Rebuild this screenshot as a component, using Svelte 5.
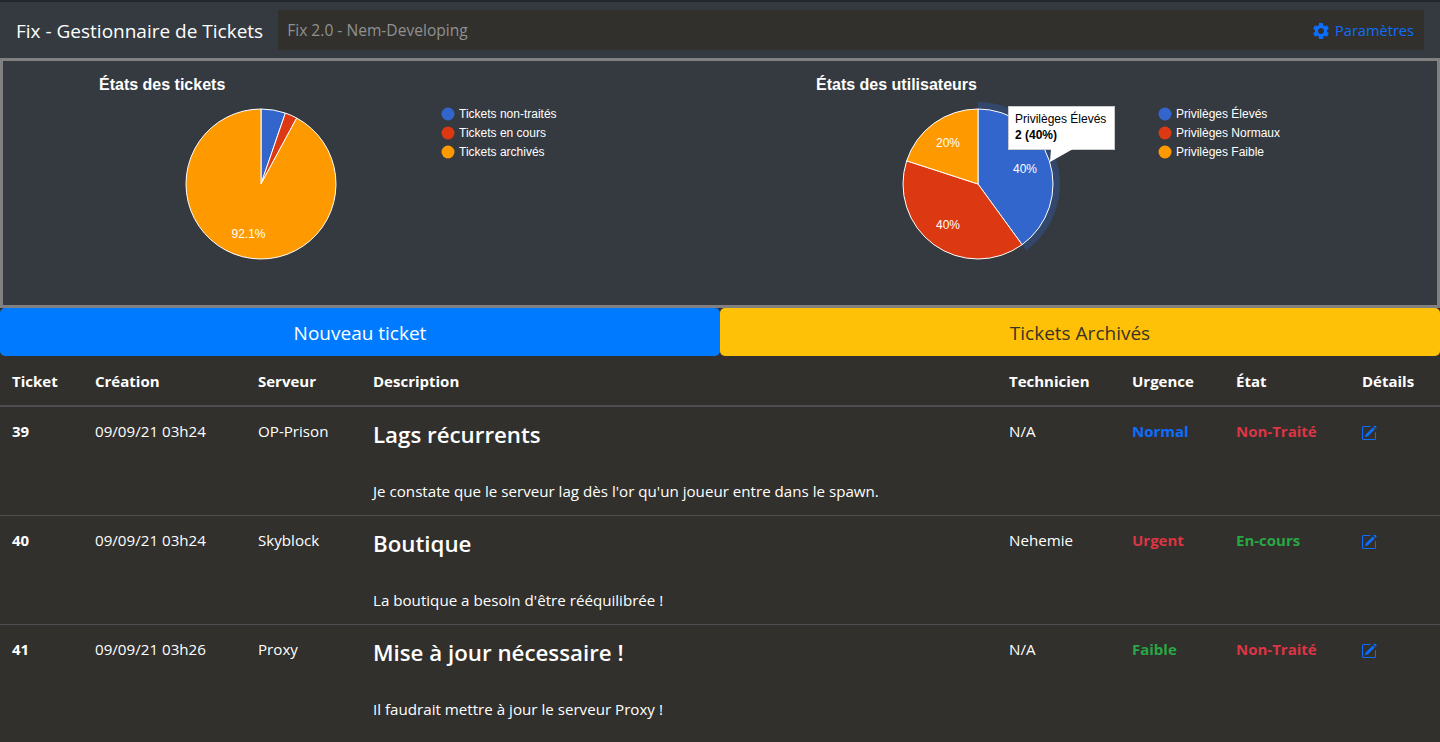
<script>
	const columns = ['Ticket', 'Création', 'Serveur', 'Description', 'Technicien', 'Urgence', 'État', 'Détails'];

	const tickets = [
		{ id: 39, date: '09/09/21 03h24', server: 'OP-Prison', title: 'Lags récurrents', text: "Je constate que le serveur lag dès l'or qu'un joueur entre dans le spawn.", tech: 'N/A', urgency: 'Normal', urgencyClass: 'blue', state: 'Non-Traité', stateClass: 'red' },
		{ id: 40, date: '09/09/21 03h24', server: 'Skyblock', title: 'Boutique', text: "La boutique a besoin d'être rééquilibrée !", tech: 'Nehemie', urgency: 'Urgent', urgencyClass: 'red', state: 'En-cours', stateClass: 'green' },
		{ id: 41, date: '09/09/21 03h26', server: 'Proxy', title: 'Mise à jour nécessaire !', text: 'Il faudrait mettre à jour le serveur Proxy !', tech: 'N/A', urgency: 'Faible', urgencyClass: 'green', state: 'Non-Traité', stateClass: 'red' }
	];

	const colors = ['#3366cc', '#dc3912', '#ff9900'];
	const cx = 258;
	const cy = 123;
	const r = 75;

	function point(radius, turn) {
		const a = turn * 2 * Math.PI;
		return [cx + radius * Math.sin(a), cy - radius * Math.cos(a)];
	}

	function slice(from, to) {
		const [x1, y1] = point(r, from);
		const [x2, y2] = point(r, to);
		const large = to - from > 0.5 ? 1 : 0;
		return `M${cx} ${cy}L${x1} ${y1}A${r} ${r} 0 ${large} 1 ${x2} ${y2}Z`;
	}

	function halo(from, to, inner, outer) {
		const [x1, y1] = point(outer, from);
		const [x2, y2] = point(outer, to);
		const [x3, y3] = point(inner, to);
		const [x4, y4] = point(inner, from);
		return `M${x1} ${y1}A${outer} ${outer} 0 0 1 ${x2} ${y2}L${x3} ${y3}A${inner} ${inner} 0 0 0 ${x4} ${y4}Z`;
	}

	function slices(values) {
		let start = 0;
		return values.map((v, i) => {
			const d = slice(start, start + v);
			start += v;
			return { d, color: colors[i] };
		});
	}

	const charts = [
		{
			title: 'États des tickets',
			legend: ['Tickets non-traités', 'Tickets en cours', 'Tickets archivés'],
			slices: slices([2 / 38, 1 / 38, 35 / 38]),
			labels: [{ x: 245.5, y: 177, text: '92.1%' }]
		},
		{
			title: 'États des utilisateurs',
			legend: ['Privilèges Élevés', 'Privilèges Normaux', 'Privilèges Faible'],
			slices: slices([0.4, 0.4, 0.2]),
			labels: [
				{ x: 305, y: 112, text: '40%' },
				{ x: 228, y: 168, text: '40%' },
				{ x: 228, y: 86, text: '20%' }
			],
			tooltip: true
		}
	];
</script>

<header class="navbar">
	<span class="brand">Fix - Gestionnaire de Tickets</span>
	<div class="nav-box">
		<span class="version">Fix 2.0 - Nem-Developing</span>
		<a class="settings" href="#settings">
			<svg class="gear" viewBox="0 0 24 24" aria-hidden="true">
				<path d="M19.14 12.94c.04-.3.06-.61.06-.94 0-.32-.02-.64-.07-.94l2.03-1.58a.49.49 0 0 0 .12-.61l-1.92-3.32a.488.488 0 0 0-.59-.29l-2.39.96c-.5-.38-1.03-.7-1.62-.94l-.36-2.54a.484.484 0 0 0-.48-.41h-3.84c-.24 0-.43.17-.47.41l-.36 2.54c-.59.24-1.13.57-1.62.94l-2.39-.96c-.22-.08-.47 0-.59.22L2.74 8.87c-.12.21-.08.47.12.61l2.03 1.58c-.05.3-.09.63-.09.94s.02.64.07.94l-2.03 1.58a.49.49 0 0 0-.12.61l1.92 3.32c.12.22.37.29.59.22l2.39-.96c.5.38 1.03.7 1.62.94l.36 2.54c.05.24.24.41.48.41h3.84c.24 0 .44-.17.47-.41l.36-2.54c.59-.24 1.13-.56 1.62-.94l2.39.96c.22.08.47 0 .59-.22l1.92-3.32c.12-.22.07-.47-.12-.61l-2.01-1.58zM12 15.6c-1.98 0-3.6-1.62-3.6-3.6s1.62-3.6 3.6-3.6 3.6 1.62 3.6 3.6-1.62 3.6-3.6 3.6z" />
			</svg>
			Paramètres
		</a>
	</div>
</header>

<section class="charts">
	{#each charts as chart}
		<svg class="chart" viewBox="0 0 717 244" width="717" height="244">
			<text class="chart-title" x="96" y="29">{chart.title}</text>

			{#if chart.tooltip}
				<path d={halo(0, 0.4, 75, 82)} fill="#3366cc" opacity="0.3" />
			{/if}
			{#each chart.slices as s}
				<path d={s.d} fill={s.color} stroke="#fff" stroke-width="1" />
			{/each}
			{#each chart.labels as label}
				<text class="slice-label" x={label.x} y={label.y}>{label.text}</text>
			{/each}

			{#each chart.legend as item, i}
				<circle cx="445" cy={53 + i * 19} r="6.5" fill={colors[i]} />
				<text class="legend" x="456" y={57 + i * 19}>{item}</text>
			{/each}

			{#if chart.tooltip}
				<rect x="288.5" y="45.5" width="106" height="43" fill="#fff" stroke="#ccc" stroke-width="1" />
				<path d="M331 88L353 88L330 101Z" fill="#fff" />
				<text class="tip" x="295" y="62">Privilèges Élevés</text>
				<text class="tip tip-bold" x="295" y="78">2 <tspan class="tip-value">(40%)</tspan></text>
			{/if}
		</svg>
	{/each}
</section>

<div class="actions">
	<a class="btn btn-blue" href="#new">Nouveau ticket</a>
	<a class="btn btn-yellow" href="#archives">Tickets Archivés</a>
</div>

<table>
	<thead>
		<tr>
			{#each columns as column}
				<th>{column}</th>
			{/each}
		</tr>
	</thead>
	<tbody>
		{#each tickets as ticket}
			<tr>
				<td class="strong">{ticket.id}</td>
				<td>{ticket.date}</td>
				<td>{ticket.server}</td>
				<td>
					<h3>{ticket.title}</h3>
					<p>{ticket.text}</p>
				</td>
				<td>{ticket.tech}</td>
				<td class="strong {ticket.urgencyClass}">{ticket.urgency}</td>
				<td class="strong {ticket.stateClass}">{ticket.state}</td>
				<td>
					<a class="edit" href="#edit" aria-label="Modifier">
						<svg viewBox="0 0 16 16" width="16" height="16" aria-hidden="true">
							<path d="M15.502 1.94a.5.5 0 0 1 0 .706L14.459 3.69l-2-2L13.502.646a.5.5 0 0 1 .707 0l1.293 1.293zm-1.75 2.456-2-2L4.939 9.21a.5.5 0 0 0-.121.196l-.805 2.414a.25.25 0 0 0 .316.316l2.414-.805a.5.5 0 0 0 .196-.12l6.813-6.814z" />
							<path d="M1 13.5A1.5 1.5 0 0 0 2.5 15h11a1.5 1.5 0 0 0 1.5-1.5v-6a.5.5 0 0 0-1 0v6a.5.5 0 0 1-.5.5h-11a.5.5 0 0 1-.5-.5v-11a.5.5 0 0 1 .5-.5H9a.5.5 0 0 0 0-1H2.5A1.5 1.5 0 0 0 1 2.5v11z" />
						</svg>
					</a>
				</td>
			</tr>
		{/each}
	</tbody>
</table>

<style>
	:global(body) {
		background: #31302c;
		font-family: 'Open Sans', 'Noto Sans', sans-serif;
		font-size: 15.15px;
		color: #fff;
		overflow: hidden;
	}

	.navbar {
		display: flex;
		align-items: center;
		height: 56px;
		padding: 0 16px;
		background: #343a40;
		border-top: 2px solid #24272b;
	}
	.brand {
		font-size: 19px;
		margin-right: 15px;
		padding-top: 1px;
		white-space: nowrap;
	}
	.nav-box {
		flex: 1;
		display: flex;
		align-items: center;
		justify-content: space-between;
		height: 40px;
		padding: 0 10px 0 9px;
		background: #31302c;
	}
	.version { color: #8f9091; font-size: 15.6px; }
	.settings {
		display: flex;
		align-items: center;
		gap: 4px;
		color: #0d6efd;
		font-size: 14.6px;
		text-decoration: none;
	}
	.gear {
		width: 20px;
		height: 20px;
		margin-top: 2px;
		fill: #0d6efd;
	}

	.charts {
		display: grid;
		grid-template-columns: 717px 717px;
		height: 244px;
		background: #343a40;
		border: 3px solid #808080;
	}
	.chart { display: block; }
	.chart-title {
		font: bold 16px 'Liberation Sans', sans-serif;
		fill: #fff;
	}
	.slice-label {
		font: 12px 'Liberation Sans', sans-serif;
		fill: #fff;
		text-anchor: middle;
	}
	.legend {
		font: 12px 'Liberation Sans', sans-serif;
		fill: #fff;
	}
	.tip {
		font: 12px 'Liberation Sans', sans-serif;
		fill: #000;
	}
	.tip-bold { font-weight: bold; }

	.actions {
		display: grid;
		grid-template-columns: 1fr 1fr;
	}
	.btn {
		display: block;
		height: 48px;
		line-height: 50px;
		text-align: center;
		font-size: 19px;
		border-radius: 5px;
		text-decoration: none;
	}
	.btn-blue { background: #007bff; color: #fff; }
	.btn-yellow { background: #ffc107; color: #3a3324; }

	table {
		width: 100%;
		table-layout: fixed;
		border-collapse: collapse;
		background: #31302c;
	}
	th, td { box-sizing: border-box; }
	th:nth-child(1) { width: 83px; }
	th:nth-child(2) { width: 163px; }
	th:nth-child(3) { width: 115px; }
	th:nth-child(4) { width: 636px; }
	th:nth-child(5) { width: 123px; }
	th:nth-child(6) { width: 104px; }
	th:nth-child(7) { width: 126px; }
	th {
		height: 50px;
		padding: 0 12px;
		text-align: left;
		font-size: 15px;
		font-weight: 700;
		border-bottom: 2px solid #4c4e51;
	}
	td {
		height: 109px;
		padding: 12px 12px 0;
		vertical-align: top;
		line-height: 24px;
		border-bottom: 1px solid #4c4e51;
	}
	tbody tr:last-child td { border-bottom: none; }
	h3 {
		margin: 0 0 28px;
		font-size: 22.3px;
		font-weight: 600;
		line-height: 32px;
	}
	p { margin: 0; }
	.strong { font-size: 15px; font-weight: 700; }
	.blue { color: #0d6efd; }
	.red { color: #dc3545; }
	.green { color: #28a745; }
	.edit {
		display: block;
		margin: 6px 0 0 -1px;
		height: 16px;
		fill: #0d6efd;
	}
	.edit svg { display: block; }
</style>
